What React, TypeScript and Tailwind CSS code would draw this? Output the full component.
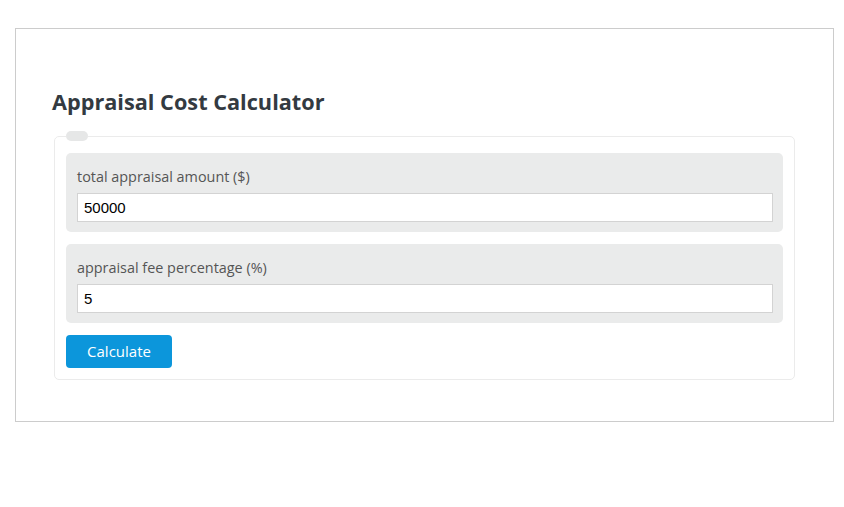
// Appraisal cost calculator: two numeric inputs and a calculate button.
const FIELDS = [
  { id: "amount", label: "total appraisal amount ($)", value: "50000" },
  { id: "fee", label: "appraisal fee percentage (%)", value: "5" },
];

export default function App() {
  return (
    <div className="min-h-[507px] bg-white pt-[28px] pl-[15px] pr-[11px] font-['Open_Sans',sans-serif]">
      <div className="w-[819px] h-[394px] border border-[#cccccc] px-[38px] pt-[58px]">
        <h2 className="-ml-[2px] text-[21.7px] font-bold leading-[30px] text-[#333a41]">
          Appraisal Cost Calculator
        </h2>

        <fieldset className="mt-[14px] rounded-[5px] border border-[#ebebeb] px-[11px] pt-[12px] pb-[11px]">
          <legend className="ml-0 h-[10px] w-[22px] rounded-full bg-[#e6e7e7]" />

          <div className="flex flex-col gap-[12px]">
            {FIELDS.map((f) => (
              <div key={f.id} className="rounded-[5px] bg-[#eaebeb] pl-[11px] pr-[10px] pt-[14px] pb-[10px]">
                <label htmlFor={f.id} className="mb-[6px] block text-[14.4px] leading-[20px] text-[#555555]">
                  {f.label}
                </label>
                <input
                  id={f.id}
                  type="text"
                  defaultValue={f.value}
                  className="block h-[29px] w-full border border-[#d3d3d3] bg-white px-[6px] font-['Liberation_Sans',Arial,sans-serif] text-[15px] text-black outline-none"
                />
              </div>
            ))}

            <div>
              <button
                type="button"
                className="h-[33px] w-[106px] rounded-[4px] bg-[#0c96db] text-[15px] text-white"
              >
                Calculate
              </button>
            </div>
          </div>
        </fieldset>
      </div>
    </div>
  );
}
